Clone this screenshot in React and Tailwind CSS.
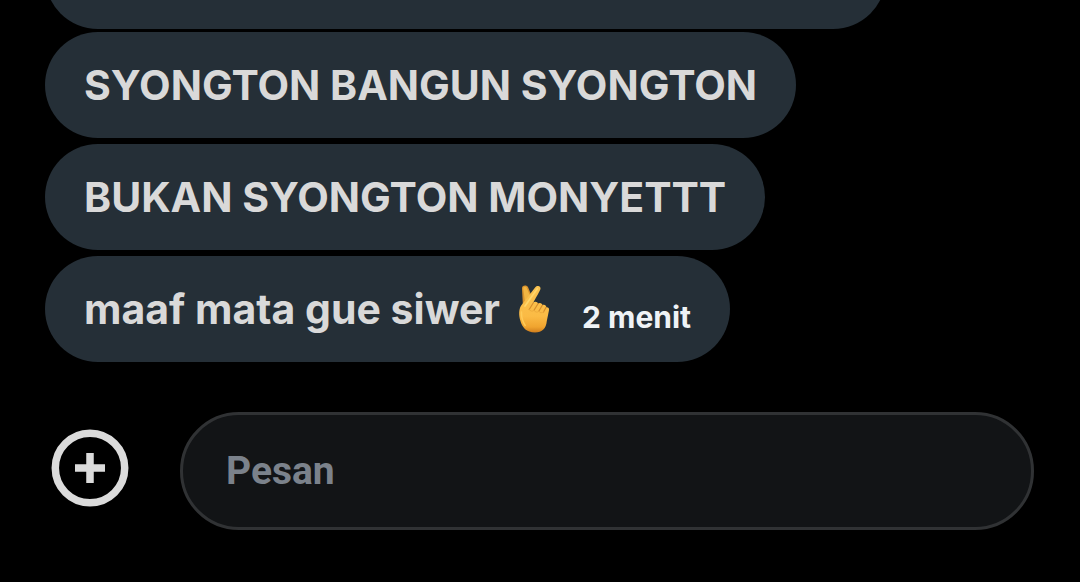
import { useState } from 'react';

const messages = [
    { id: 1, text: 'SYONGTON BANGUN SYONGTON' },
    { id: 2, text: 'BUKAN SYONGTON MONYETTT' },
    { id: 3, text: 'maaf mata gue siwer', emoji: true, time: '2 menit' },
];

function CrossedFingers() {
    return (
        <svg viewBox="0 0 32 50" className="ml-[18px] h-[50px] w-8 shrink-0" role="img" aria-label="crossed fingers">
            <defs>
                <linearGradient id="skin" x1="0" y1="0" x2="0" y2="1">
                    <stop offset="0" stopColor="#f9c250" />
                    <stop offset="0.65" stopColor="#fbbb45" />
                    <stop offset="0.88" stopColor="#f0a42f" />
                    <stop offset="1" stopColor="#cf7d1c" />
                </linearGradient>
            </defs>
            <path d="M4 4.800c-.5-3.600 4.800-4.400 6.200-1.200l3 7.400L5 23z" fill="#d8922d" />
            <path d="M5.200 4.200c.4-1.800 3-1.800 3.700 0l3 7-5 6z" fill="#f2b542" />
            <path
                d="M17.300 3.200c2-2.700 6.300-.8 5 2.400-1.200 2.800-5 9.300-7.200 13.400 1.500-2 4.700-1.500 4.900.8 1.600-1.600 4.500-.6 4.300 1.500 1.900-1.100 4.100 0 3.900 1.900 1.900-.4 3.200 1 2.800 3L28.800 37c-.7 7.500-4.500 11.500-11.800 11.500C8.600 48.500 4 43.500 2.300 36.500.8 31 .7 25.800 3 21.800z"
                fill="url(#skin)"
            />
            <path
                d="M15.200 19l-4 6.500M20 19.800l-4 6.500M24.300 21.300l-3.500 6M28.100 23.300L25.500 28"
                fill="none" stroke="#d58d2c" strokeWidth="1.200" strokeLinecap="round"
            />
            <path
                d="M11.200 25.500c1.200 1.900 3.400 2.100 4.800.8 1 2 3.400 2.300 4.800 1 1 1.700 3.200 2 4.700.7"
                fill="none" stroke="#eeac3c" strokeWidth="1" strokeLinecap="round"
            />
            <path d="M19.300 4.700L7 22" fill="none" stroke="#ffd66b" strokeWidth="1.700" strokeLinecap="round" />
            <path d="M3.500 28c-.2 5 1.300 10 3.700 13.500" fill="none" stroke="#ffcb58" strokeWidth="1.500" strokeLinecap="round" />
        </svg>
    );
}

function Bubble({ message }) {
    return (
        <li className="flex h-[106px] items-center rounded-full bg-[#252f37] px-[39px] text-[#d9d9d9]">
            <p className="whitespace-nowrap text-[41px] font-bold leading-[52px]">{message.text}</p>
            {message.emoji && <CrossedFingers />}
            {message.time && (
                <time className="ml-8 whitespace-nowrap pt-4 text-[30px] font-bold text-[#eff3f6]">{message.time}</time>
            )}
        </li>
    );
}

export default function App() {
    const [draft, setDraft] = useState('');

    return (
        <main className="min-h-screen overflow-hidden bg-black font-['Inter',sans-serif]">
            <div className="h-[29px] overflow-hidden pl-[45px] pr-[194px]">
                <div className="-mt-[77px] h-[106px] rounded-full bg-[#252f37]" />
            </div>
            <ul className="mt-[3px] flex flex-col items-start gap-1.5 pl-[45px]">
                {messages.map(m => <Bubble key={m.id} message={m} />)}
            </ul>
            <form
                className="mt-[50px] flex items-center gap-[51px] pl-[51px] pr-[46px]"
                onSubmit={e => { e.preventDefault(); setDraft(''); }}>
                <button type="button" aria-label="Tambah" className="shrink-0 pb-1.5 text-[#dbdbdb]">
                    <svg viewBox="0 0 78 78" className="size-[78px]" fill="none" stroke="currentColor" strokeWidth="7.5">
                        <circle cx="39" cy="39" r="34.700" />
                        <path d="M24 39h30M39 24v30" />
                    </svg>
                </button>
                <input
                    aria-label="Pesan"
                    placeholder="Pesan"
                    value={draft}
                    onChange={e => setDraft(e.target.value)}
                    className="h-[118px] min-w-0 flex-1 rounded-full border-[3px] border-[#303234] bg-[#121416] px-[43px] font-['Roboto',sans-serif] text-[39px] font-bold text-[#d9d9d9] outline-none placeholder:text-[#7b828b]"
                />
            </form>
        </main>
    );
}
